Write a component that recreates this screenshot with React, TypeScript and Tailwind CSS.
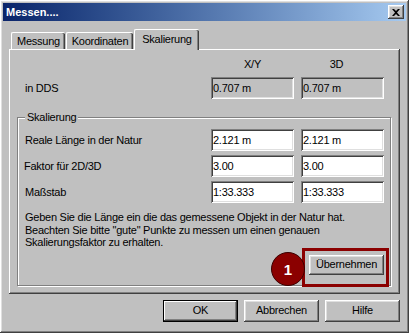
import React from "react";

const raised =
  "shadow-[inset_-1px_-1px_0_#404040,inset_1px_1px_0_#ffffff,inset_-2px_-2px_0_#808080,inset_2px_2px_0_#dfdfdf]";
const sunken =
  "shadow-[inset_1px_1px_0_#808080,inset_-1px_-1px_0_#ffffff,inset_2px_2px_0_#404040,inset_-2px_-2px_0_#dfdfdf]";

function Field({ value, readOnly }: { value: string; readOnly?: boolean }) {
  return (
    <div
      className={`h-[22px] w-[83px] flex items-center pl-[2px] text-black ${sunken} ${
        readOnly ? "bg-[#c0c0c0]" : "bg-white"
      }`}
    >
      {value}
    </div>
  );
}

function Btn({ label, def }: { label: string; def?: boolean }) {
  return (
    <div
      className={`w-[75px] h-[22px] flex items-center justify-center text-black ${
        def
          ? "border border-black shadow-[inset_-1px_-1px_0_#404040,inset_1px_1px_0_#ffffff,inset_-2px_-2px_0_#808080]"
          : raised
      }`}
    >
      {label}
    </div>
  );
}

export default function App() {
  return (
    <div
      className={`relative w-[409px] h-[333px] bg-[#c0c0c0] p-[3px] flex flex-col text-[11px] leading-[13px] tracking-[-0.25px] text-black ${raised}`}
      style={{ fontFamily: '"Liberation Sans", Arial, sans-serif' }}
    >
      {/* Title bar */}
      <div className="h-[18px] flex items-center justify-between pl-[3px] pr-[2px] bg-gradient-to-r from-[#0a246a] to-[#a6caf0]">
        <span className="text-white font-bold text-[11px] tracking-normal">Messen....</span>
        <div className={`w-[16px] h-[14px] bg-[#c0c0c0] flex items-center justify-center ${raised}`}>
          <svg width="8" height="7" viewBox="0 0 8 7">
            <path d="M0 0 L2 0 L4 2 L6 0 L8 0 L5 3.5 L8 7 L6 7 L4 5 L2 7 L0 7 L3 3.5 Z" fill="#000" />
          </svg>
        </div>
      </div>

      {/* Tabs */}
      <div className="mt-[8px] mx-[6px] h-[20px] flex items-end pl-[2px] gap-[1px] relative z-10">
        <div className="w-[54px] h-[17px] flex items-center justify-center rounded-t-[2px] border-t border-l border-white shadow-[inset_-1px_0_0_#404040,inset_-2px_0_0_#808080]">
          Messung
        </div>
        <div className="w-[67px] h-[17px] flex items-center justify-center rounded-t-[2px] border-t border-l border-white shadow-[inset_-1px_0_0_#404040,inset_-2px_0_0_#808080]">
          Koordinaten
        </div>
        <div className="w-[65px] h-[21px] mb-[-1px] pb-[2px] bg-[#c0c0c0] flex items-center justify-center rounded-t-[2px] border-t border-l border-white shadow-[inset_-1px_0_0_#404040,inset_-2px_0_0_#808080]">
          Skalierung
        </div>
      </div>

      {/* Panel */}
      <div className="mx-[6px] pt-[9px] pb-[8px] shadow-[inset_-1px_-1px_0_#404040,inset_1px_1px_0_#ffffff,inset_-2px_-2px_0_#808080]">
        <div className="grid grid-cols-[195px_83px_83px] gap-x-[7px]">
          <div className="h-[13px]" />
          <div className="text-center">X/Y</div>
          <div className="text-center pr-[12px]">3D</div>
        </div>
        <div className="mt-[6px] grid grid-cols-[195px_83px_83px] gap-x-[7px] items-center">
          <div className="pl-[16px]">in DDS</div>
          <Field value="0.707 m" readOnly />
          <Field value="0.707 m" readOnly />
        </div>

        {/* Group box */}
        <div className="relative mt-[18px] ml-[8px] w-[374px] border border-[#808080] shadow-[1px_1px_0_#ffffff,inset_1px_1px_0_#ffffff] pt-[11px] pb-[10px]">
          <div className="absolute left-[7px] top-[-7px] px-[2px] bg-[#c0c0c0]">Skalierung</div>
          <div className="grid grid-cols-[186px_83px_83px] gap-x-[7px] gap-y-[4px] items-center">
            <div className="pl-[7px]">Reale Länge in der Natur</div>
            <Field value="2.121 m" />
            <Field value="2.121 m" />
            <div className="pl-[6px]">Faktor für 2D/3D</div>
            <Field value="3.00" />
            <Field value="3.00" />
            <div className="pl-[7px]">Maßstab</div>
            <Field value="1:33.333" />
            <Field value="1:33.333" />
          </div>
          <p className="mt-[8px] pl-[7px] leading-[12.5px]">
            Geben Sie die Länge ein die das gemessene Objekt in der Natur hat.
            <br />
            Beachten Sie bitte "gute" Punkte zu messen um einen genauen
            <br />
            Skalierungsfaktor zu erhalten.
          </p>
          <div className="mt-[6px] flex justify-end pr-[6px]">
            <div className={`w-[75px] h-[20px] flex items-center justify-center ${raised}`}>Übernehmen</div>
          </div>
        </div>
      </div>

      {/* Bottom buttons */}
      <div className="mt-[6px] mr-[6px] flex justify-end gap-[6px]">
        <Btn label="OK" def />
        <Btn label="Abbrechen" />
        <Btn label="Hilfe" />
      </div>

      {/* Annotation overlay */}
      <div className="absolute left-[302px] top-[248px] w-[87px] h-[39px] border-[3px] border-[#8b0000]" />
      <div className="absolute left-[271px] top-[252px] w-[34px] h-[34px] rounded-full bg-[#8b0000] border border-[#3a0000] flex items-center justify-center text-white font-bold text-[15px] tracking-normal">
        1
      </div>
    </div>
  );
}
